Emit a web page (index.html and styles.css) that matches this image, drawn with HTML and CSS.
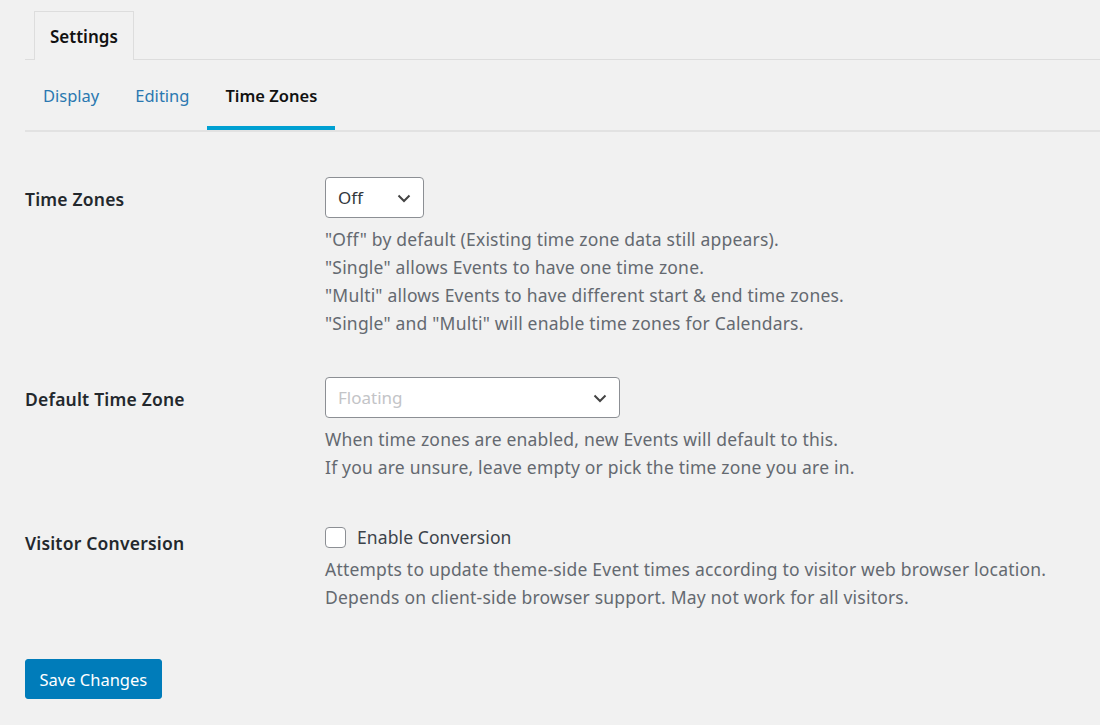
FILE: index.html
```html
<!DOCTYPE html>
<html lang="en">
<head>
    <meta charset="UTF-8">
    <meta name="viewport" content="width=device-width, initial-scale=1.0">
    <title>Settings - Time Zones</title>
    <link rel="stylesheet" href="styles.css">
</head>
<body>
    <div class="wrap">
        <div class="nav-tabs">
            <a class="nav-tab" href="#">Settings</a>
        </div>
        <div class="sub-nav">
            <a href="#" class="sub-tab">Display</a>
            <a href="#" class="sub-tab">Editing</a>
            <a href="#" class="sub-tab active">Time Zones</a>
        </div>

        <form class="settings-form">
            <div class="form-row row-zones">
                <label class="row-label" for="tz_mode">Time Zones</label>
                <div class="row-field">
                    <div class="select small">
                        <span>Off</span>
                        <svg viewBox="0 0 16 16" width="16" height="16"><path d="M2.5 5.5 L8 11 L13.5 5.5" fill="none" stroke="#444" stroke-width="2"/></svg>
                    </div>
                    <p class="description">
                        "Off" by default (Existing time zone data still appears).<br>
                        "Single" allows Events to have one time zone.<br>
                        "Multi" allows Events to have different start &amp; end time zones.<br>
                        "Single" and "Multi" will enable time zones for Calendars.
                    </p>
                </div>
            </div>

            <div class="form-row row-default">
                <label class="row-label" for="tz_default">Default Time Zone</label>
                <div class="row-field">
                    <div class="select wide">
                        <span class="placeholder">Floating</span>
                        <svg viewBox="0 0 16 16" width="16" height="16"><path d="M2.5 5.5 L8 11 L13.5 5.5" fill="none" stroke="#444" stroke-width="2"/></svg>
                    </div>
                    <p class="description">
                        When time zones are enabled, new Events will default to this.<br>
                        If you are unsure, leave empty or pick the time zone you are in.
                    </p>
                </div>
            </div>

            <div class="form-row row-visitor">
                <span class="row-label">Visitor Conversion</span>
                <div class="row-field">
                    <label class="check"><span class="checkbox"></span>Enable Conversion</label>
                    <p class="description">
                        Attempts to update theme-side Event times according to visitor web browser location.<br>
                        Depends on client-side browser support. May not work for all visitors.
                    </p>
                </div>
            </div>

            <button type="submit" class="button-primary">Save Changes</button>
        </form>
    </div>
</body>
</html>
```

FILE: styles.css
```css
body {
    margin: 0;
    background: #f1f1f1;
    font-family: "Noto Sans", "Open Sans", Arial, sans-serif;
    color: #444;
}
.wrap {
    padding: 11px 0 0 25px;
}
.nav-tabs {
    display: flex;
    border-bottom: 1px solid #ddd;
    padding-left: 9px;
}
.nav-tab {
    display: block;
    height: 48px;
    line-height: 49px;
    padding: 0 15px;
    border: 1px solid #ddd;
    border-bottom: none;
    margin-bottom: -1px;
    background: #f1f1f1;
    color: #111;
    font-size: 17px;
    font-weight: 600;
    text-decoration: none;
}
.sub-nav {
    display: flex;
    height: 70px;
    border-bottom: 2px solid #e2e2e2;
}
.sub-tab {
    display: block;
    padding: 0 18px;
    line-height: 72px;
    font-size: 16.5px;
    color: #2a78b0;
    text-decoration: none;
    border-bottom: 4px solid transparent;
}
.sub-tab.active {
    color: #111;
    font-weight: 600;
    border-bottom-color: #00a0d2;
}
.settings-form {
    padding-top: 45px;
}
.form-row {
    display: grid;
    grid-template-columns: 300px 1fr;
}
.row-zones {
    margin-bottom: 40px;
}
.row-default {
    margin-bottom: 42px;
}
.row-visitor {
    margin-bottom: 48px;
}
.row-label {
    margin-top: 8px;
    font-size: 17.5px;
    letter-spacing: 0.2px;
    font-weight: 600;
    line-height: 28px;
    color: #23282d;
}
.row-visitor .row-label {
    margin-top: 6px;
}
.select {
    display: flex;
    align-items: center;
    justify-content: space-between;
    box-sizing: border-box;
    height: 41px;
    padding: 0 11px 0 12px;
    border: 1px solid #8c8f94;
    border-radius: 4px;
    background: #fff;
    font-size: 17px;
    color: #32373c;
}
.select.small {
    width: 99px;
}
.select.wide {
    width: 295px;
}
.placeholder {
    color: #c3c4c7;
}
.description {
    margin: 7px 0 0;
    font-size: 17.5px;
    letter-spacing: 0.2px;
    line-height: 28px;
    color: #646970;
}
.check {
    display: flex;
    align-items: center;
    height: 28px;
    font-size: 17.5px;
    letter-spacing: 0.1px;
    color: #3c434a;
}
.checkbox {
    display: block;
    box-sizing: border-box;
    width: 21px;
    height: 21px;
    margin-right: 11px;
    border: 1px solid #8c8f94;
    border-radius: 4px;
    background: #fff;
}
.row-visitor .description {
    margin-top: 4px;
}
.button-primary {
    display: block;
    height: 40px;
    padding: 0 13.5px;
    border: 1px solid #007cba;
    border-radius: 3px;
    background: #007cba;
    color: #fff;
    font-family: inherit;
    font-size: 16.5px;
    cursor: pointer;
}
```
